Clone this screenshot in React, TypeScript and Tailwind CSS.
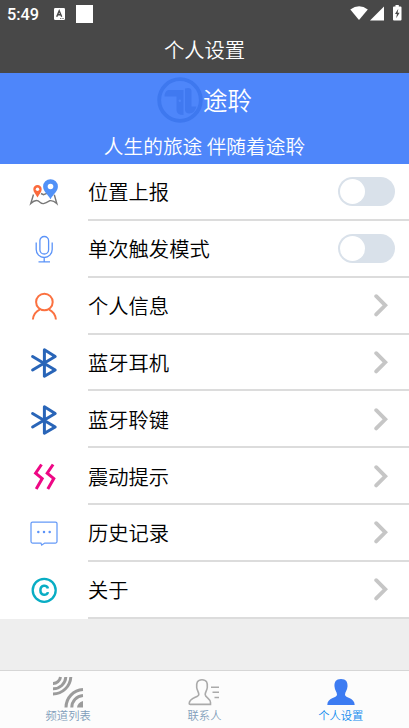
import type { ReactNode } from 'react';

const MapIcon = () => (
  <svg className="mt-[2px]" width="30" height="28" viewBox="0 0 30 28" fill="none">
    <path d="M4.5 15.5L1.8 24.5Q6 20.500 9 21.800Q12.500 25 14.500 24.600Q17 24 20.500 21.800Q24 21 27.800 24.600L25.300 15.800M12 14.500L14.500 15.700L18.500 14.200" stroke="#777" strokeWidth="1.4" />
    <path d="M8.500 18.500C6.500 15 4.300 13 4.300 10.300a4.200 4.200 0 0 1 8.400 0C12.700 13 10.500 15 8.500 18.500z" fill="#fb6a3c" />
    <circle cx="8.500" cy="10.300" r="1.700" fill="#fff" />
    <path d="M21.500 20.200C18.500 15 14.100 12.500 14.100 7.600a7.400 7.400 0 0 1 14.800 0C28.900 12.500 24.500 15 21.500 20.200z" fill="#5191f7" />
    <circle cx="21.500" cy="7.500" r="2.800" fill="#fff" />
  </svg>
);

const MicIcon = () => (
  <svg width="30" height="28" viewBox="0 0 30 28" fill="none" stroke="#5b93f8" strokeWidth="1.3">
    <rect x="10.900" y="1.500" width="8.700" height="17.500" rx="4.350" />
    <path d="M7.200 7.500V14.500a8 8 0 0 0 16 0V7.500M15.200 22.500V26.700M9.500 26.800H21" />
  </svg>
);

const PersonIcon = () => (
  <svg width="30" height="28" viewBox="0 0 30 28" fill="none" stroke="#fb7140" strokeWidth="2">
    <circle cx="15.400" cy="10" r="8.300" />
    <path d="M3.900 27.500C4.400 22.500 7.200 19.200 11 17.400M19.800 17.400C23.600 19.200 26.400 22.500 26.900 27.500" />
  </svg>
);

const BluetoothIcon = () => (
  <svg width="30" height="32" viewBox="0 0 30 32" fill="none" stroke="#2965b8" strokeWidth="3" strokeLinecap="round" strokeLinejoin="round">
    <path d="M3.600 9.500L26.200 23L15.400 29.300V2.700L26.200 9.500L3.600 23" />
  </svg>
);

const VibrateIcon = () => (
  <svg width="30" height="28" viewBox="0 0 30 28" fill="none" stroke="#ee0785" strokeWidth="3">
    <path d="M12.500 1.500L6.600 10.200L13.200 15.500L7.200 25.900M24.100 1.500L18.200 10.200L24.800 15.500L18.800 25.900" />
  </svg>
);

const MessageIcon = () => (
  <svg width="30" height="28" viewBox="0 0 30 28">
    <path d="M3.500 3H26.500Q28 3 28 4.500V22.500Q28 24 26.500 24H15.800L12.700 26L11.900 24H3.500Q2 24 2 22.500V4.500Q2 3 3.500 3z" fill="none" stroke="#6499f7" strokeWidth="1.250" />
    <g fill="#5b93f8">
      <circle cx="9.300" cy="13" r="1.250" />
      <circle cx="15" cy="13" r="1.250" />
      <circle cx="20.700" cy="13" r="1.250" />
    </g>
  </svg>
);

const CopyrightIcon = () => (
  <svg width="30" height="28" viewBox="0 0 30 28" fill="none" stroke="#08adc4">
    <circle cx="15.200" cy="14.300" r="11.500" strokeWidth="2.300" />
    <path d="M18.900 12.500C18.400 8.700 11.400 8.400 11.400 14.300S18.400 19.900 18.900 16.100" strokeWidth="2.500" />
  </svg>
);

const Chevron = () => (
  <svg className="mr-[20.500px]" width="16" height="24" viewBox="0 0 16 24" fill="none" stroke="#c6c6c6" strokeWidth="3.800" strokeLinecap="round">
    <path d="M3.200 3.200L12.300 12.300L3.200 21.400" />
  </svg>
);

const Toggle = () => (
  <div className="mr-[13.700px] flex h-[29px] w-[57px] items-center rounded-full bg-[#d9e1ea] pl-[2px]">
    <div className="h-[25px] w-[25px] rounded-full bg-white" />
  </div>
);

const rows: { label: string; icon: ReactNode; toggle?: boolean }[] = [
  { label: '位置上报', icon: <MapIcon />, toggle: true },
  { label: '单次触发模式', icon: <MicIcon />, toggle: true },
  { label: '个人信息', icon: <PersonIcon /> },
  { label: '蓝牙耳机', icon: <BluetoothIcon /> },
  { label: '蓝牙聆键', icon: <BluetoothIcon /> },
  { label: '震动提示', icon: <VibrateIcon /> },
  { label: '历史记录', icon: <MessageIcon /> },
  { label: '关于', icon: <CopyrightIcon /> },
];

const ChannelIcon = () => (
  <svg width="32" height="32" viewBox="0 0 32 32" fill="none" stroke="#9b9b9b" strokeWidth="3">
    <path d="M1 7.500A7.500 7.500 0 0 0 8.500 1M1 12.800A12.500 12.500 0 0 0 13.800 1M1 18A18 18 0 0 0 18.800 1" />
    <path d="M31 13.500A18 18 0 0 0 14 31.500M31 19.500A12 12 0 0 0 19.800 31.500" />
    <path d="M31 25V31.500H25Q25.500 26.500 31 25z" fill="#9b9b9b" stroke="none" />
  </svg>
);

const ContactsIcon = () => (
  <svg width="32" height="32" viewBox="0 0 32 32" fill="none" stroke="#aaa" strokeWidth="1.600">
    <path d="M14 3.700C9.300 3.700 8.200 7 8.700 11.500C9 14.500 10.800 16 10.800 18.500C10.800 21.500 1.200 21.500 1.200 27.500Q1.200 28.400 2.200 28.400H22.500V26.500C22.500 22.500 17.200 21.500 17.200 18.500C17.200 16 19 14.500 19.300 11.500C19.800 7 18.700 3.700 14 3.700z" />
    <path d="M23 11.200H31M24.500 16.300H31M26.500 21.500H31" />
  </svg>
);

const ProfileIcon = () => (
  <svg width="32" height="32" viewBox="0 0 32 32" fill="#3d7cf2">
    <path d="M16 3C10.800 3 9.200 6 9.500 10.500C9.700 14 12 16 12 18.800C12 22 2.300 21.500 2.300 29H29.700C29.700 21.500 20 22 20 18.800C20 16 22.300 14 22.500 10.500C22.800 6 21.200 3 16 3z" />
  </svg>
);

const tabs = [
  { label: '频道列表', icon: <ChannelIcon />, color: 'text-[#7f9dba]' },
  { label: '联系人', icon: <ContactsIcon />, color: 'text-[#7f9dba]' },
  { label: '个人设置', icon: <ProfileIcon />, color: 'text-[#118bee]' },
];

export default function App() {
  return (
    <div className="flex h-[728px] w-[409px] flex-col overflow-hidden bg-[#eee] font-['Noto_Sans_CJK_SC',sans-serif] font-[350] text-black">
      <header className="h-[73px] shrink-0 bg-[#484848] text-white">
        <div className="flex h-[28px] items-center">
          <span className="ml-[7px] w-[47px] pt-px font-[Roboto,sans-serif] text-[16.300px] leading-7 font-medium">5:49</span>
          <svg width="11" height="12" viewBox="0 0 11 12">
            <rect width="11" height="12" rx="1.200" fill="#fff" />
            <path d="M2.700 8.800L5.200 2.800L7.700 8.800M3.600 6.700H6.800" fill="none" stroke="#484848" strokeWidth="1.400" />
            <path d="M6.300 10.500H7.300M8.500 10.500H9.500" stroke="#484848" />
          </svg>
          <div className="ml-[11px] h-[18px] w-[17px] bg-white" />
          <svg className="mt-[-2px] ml-auto" width="54" height="18" viewBox="0 0 54 18" fill="#fff">
            <path d="M.3 5.500Q9.200-1 17.800 5.500L9 16z" />
            <path d="M20 16.500L34 2.500V16.500z" />
            <path fillRule="evenodd" d="M45.500 1H48.800V2.500H50.500Q51.500 2.500 51.500 3.500V15.500Q51.500 16.500 50.500 16.500H44Q43 16.500 43 15.500V3.500Q43 2.500 44 2.500H45.500zM48.300 4.800L45 10H46.900L46.200 14.200L49.600 8.700H47.600z" />
          </svg>
          <div className="w-[5px]" />
        </div>
        <h1 className="text-center text-[20.300px] leading-[43px] font-[350]">个人设置</h1>
      </header>
      <section className="h-[91px] shrink-0 bg-[#4e86fa] text-white">
        <div className="flex h-[54px] items-center justify-center">
          <svg width="46" height="46" viewBox="0 0 46 46">
            <circle cx="23" cy="23" r="20.800" fill="none" stroke="#3e78ef" strokeWidth="3.800" />
            <path d="M11 13H26.500V38Q19.500 38 19.500 33V19.500H7.500Q7.500 14.500 11 13z" fill="#4079f0" />
            <path d="M28 11.500Q34.500 10 34.500 14V29.500H39.500Q38 36 32.500 36.500Q28 36.500 28 32.500z" fill="#4079f0" />
            <circle cx="22.800" cy="23.700" r="1.200" fill="#4e86fa" />
          </svg>
          <span className="text-[24.500px] leading-[36px]">途聆</span>
        </div>
        <p className="text-center text-[19.700px] leading-[37px]">人生的旅途 伴随着途聆</p>
      </section>
      <main className="shrink-0 bg-white">
        {rows.map((row) => (
          <div key={row.label} className="flex h-[56.850px]">
            <div className="flex w-[88px] items-center justify-center">{row.icon}</div>
            <div className="flex flex-1 items-center justify-between border-b-2 border-[#dcdcdc]">
              <span className="text-[20.300px] leading-[30px]">{row.label}</span>
              {row.toggle ? <Toggle /> : <Chevron />}
            </div>
          </div>
        ))}
      </main>
      <nav className="mt-auto grid h-[58px] shrink-0 grid-cols-3 border-t border-[#d6d6d6] bg-[#fcfcfc]">
        {tabs.map((tab) => (
          <div key={tab.label} className="flex flex-col items-center pt-[5px]">
            {tab.icon}
            <span className={`text-[11.300px] leading-[14px] ${tab.color}`}>{tab.label}</span>
          </div>
        ))}
      </nav>
    </div>
  );
}
